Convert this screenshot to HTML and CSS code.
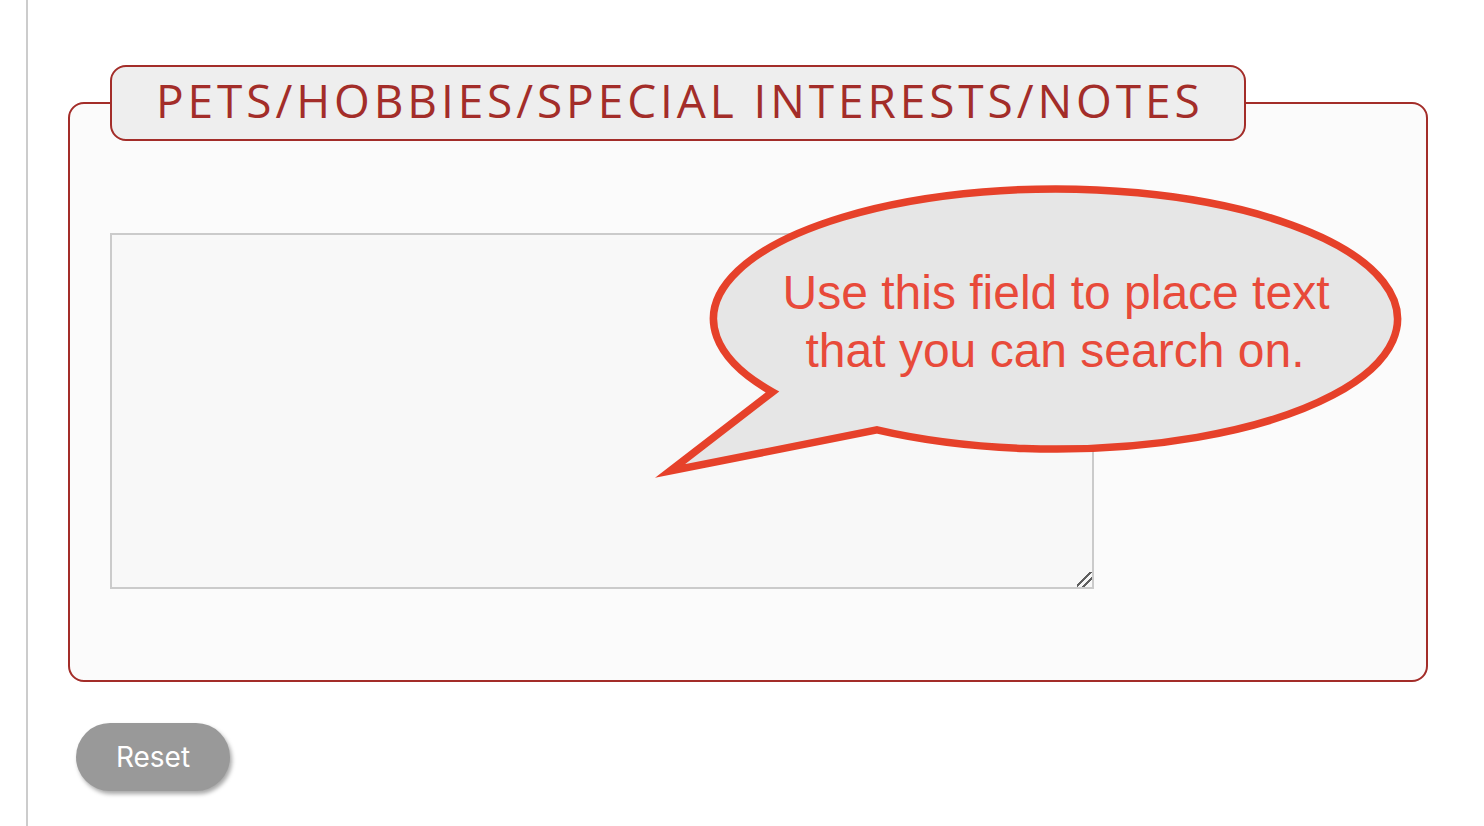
FILE: index.html
```html
<!DOCTYPE html>
<html lang="en">
<head>
<meta charset="utf-8">
<title>Pets / Hobbies</title>
<link rel="stylesheet" href="styles.css">
</head>
<body>
<div class="page">
  <form class="form">
    <fieldset class="group">
      <legend class="group-title">PETS/HOBBIES/SPECIAL INTERESTS/NOTES</legend>
      <textarea class="notes" name="notes"></textarea>
    </fieldset>
    <button type="reset" class="reset-btn">Reset</button>
  </form>
  <svg class="callout" width="760" height="310" viewBox="650 180 760 310" aria-label="Hint">
    <path class="callout-shape" d="M 772.5 392 L 670 471 L 877 429.9 A 342 130 0 1 0 772.5 392 Z"/>
    <text class="callout-text" x="1056" y="309">Use this field to place text</text>
    <text class="callout-text" x="1055" y="367">that you can search on.</text>
  </svg>
</div>
</body>
</html>
```
FILE: styles.css
```css
html, body {
  margin: 0;
  padding: 0;
  background: #ffffff;
}

.page {
  position: relative;
  margin-left: 26px;
  border-left: 2px solid #cccccc;
  padding: 65px 0 0 40px;
  min-height: 100vh;
  box-sizing: border-box;
}

.form {
  display: flex;
  flex-direction: column;
  align-items: flex-start;
}

.group {
  box-sizing: border-box;
  width: 1360px;
  margin: 0;
  padding: 92px 40px 91px 40px;
  border: 2px solid #a32d29;
  border-radius: 16px;
  background: #fbfbfb;
  min-width: 0;
}

.group-title {
  margin: 0;
  padding: 0 40px 6px 44px;
  height: 66px;
  line-height: 66px;
  border: 2px solid #a32d29;
  border-radius: 16px;
  background: #eeeeee;
  color: #a32d29;
  font-family: "Open Sans", "Liberation Sans", sans-serif;
  font-size: 46px;
  font-weight: 400;
  letter-spacing: 3.9px;
  white-space: nowrap;
}

.notes {
  display: block;
  box-sizing: border-box;
  width: 984px;
  height: 356px;
  margin: 0;
  border: 2px solid #cbcbcb;
  background: #f8f8f8;
  font-family: "Liberation Sans", sans-serif;
  font-size: 16px;
}

.notes::-webkit-resizer {
  background-color: #f8f8f8;
  background-image: linear-gradient(135deg,
    transparent 0 42%,
    #606060 42% 52%,
    transparent 52% 65%,
    #606060 65% 75%,
    transparent 75% 100%);
}

.reset-btn {
  margin: 41px 0 0 8px;
  width: 154px;
  height: 68px;
  border: none;
  border-radius: 34px;
  background: #999999;
  color: #ffffff;
  font-family: Inter, "Liberation Sans", Arial, sans-serif;
  font-size: 28px;
  box-shadow: 2px 3px 4px rgba(0, 0, 0, 0.35);
  cursor: pointer;
}

.callout {
  position: absolute;
  left: 622px;
  top: 180px;
  overflow: visible;
}

.callout-shape {
  fill: #e6e6e6;
  stroke: #e6412a;
  stroke-width: 7.5;
  stroke-miterlimit: 12;
  stroke-linejoin: miter;
}

.callout-text {
  fill: #e84a3a;
  font-family: "Liberation Sans", Arial, sans-serif;
  font-size: 48px;
  text-anchor: middle;
}
```
